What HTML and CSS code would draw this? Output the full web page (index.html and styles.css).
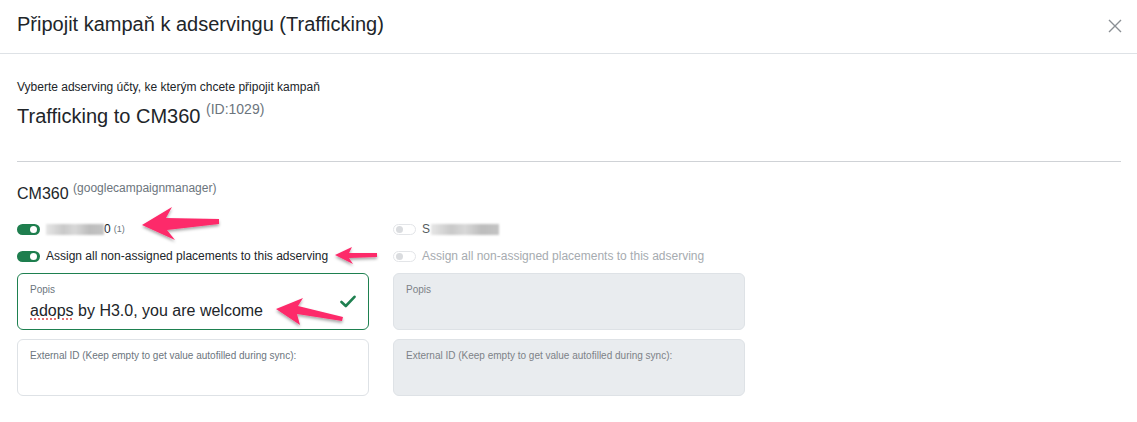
FILE: index.html
```html
<!DOCTYPE html>
<html lang="cs">
<head>
<meta charset="utf-8">
<title>Připojit kampaň k adservingu</title>
<link rel="stylesheet" href="styles.css">
</head>
<body>
<div class="modal">
  <header class="modal-header">
    <h1 class="modal-title">Připojit kampaň k adservingu (Trafficking)</h1>
    <button class="close" aria-label="Close">
      <svg width="14" height="14" viewBox="0 0 14 14"><path d="M1 1L13 13M13 1L1 13" stroke="#8a8f94" stroke-width="1.4" fill="none"/></svg>
    </button>
  </header>
  <main class="modal-body">
    <p class="hint">Vyberte adserving účty, ke kterým chcete připojit kampaň</p>
    <h2 class="traf">Trafficking to CM360 <sup class="sub-id">(ID:1029)</sup></h2>
    <hr class="divider">
    <h3 class="sys">CM360 <sup class="sys-note">(googlecampaignmanager)</sup></h3>
    <div class="cols">
      <div class="col">
        <label class="row">
          <span class="switch on"></span>
          <span class="acct"><span class="blur w84"></span>0 <sup class="cnt">(1)</sup></span>
        </label>
        <label class="row">
          <span class="switch on"></span>
          <span class="txt">Assign all non-assigned placements to this adserving</span>
        </label>
        <div class="field valid">
          <div class="flabel">Popis</div>
          <div class="fvalue"><span class="spell">adops</span> by H3.0, you are welcome</div>
          <svg class="check" width="16" height="13" viewBox="0 0 16 13"><path d="M1.5 7L5.8 11L14.5 1.8" stroke="#1e8050" stroke-width="2.6" fill="none" stroke-linecap="round" stroke-linejoin="round"/></svg>
        </div>
        <div class="field">
          <div class="flabel">External ID (Keep empty to get value autofilled during sync):</div>
        </div>
      </div>
      <div class="col disabled">
        <label class="row">
          <span class="switch"></span>
          <span class="acct sdim">S<span class="blur w68"></span></span>
        </label>
        <label class="row">
          <span class="switch"></span>
          <span class="txt dim">Assign all non-assigned placements to this adserving</span>
        </label>
        <div class="field off">
          <div class="flabel">Popis</div>
        </div>
        <div class="field off">
          <div class="flabel">External ID (Keep empty to get value autofilled during sync):</div>
        </div>
      </div>
    </div>
  </main>
</div>
<svg class="arrows" width="1137" height="422" viewBox="0 0 1137 422">
  <defs>
    <filter id="sh" x="-20%" y="-20%" width="140%" height="160%">
      <feDropShadow dx="0" dy="2" stdDeviation="1.5" flood-color="#000" flood-opacity="0.35"/>
    </filter>
  </defs>
  <g fill="#fd2a6a" filter="url(#sh)">
    <polygon points="142,225 172,207 166,218 219,219 219,224 167,230 175,240"/>
    <polygon points="335,255 352,247 349,253 377,253 377,257 349,258 353,264"/>
    <polygon points="276,309 303,298 298,306 343,317 342,321 297,314 300,325"/>
  </g>
</svg>
</body>
</html>
```

FILE: styles.css
```css
* { box-sizing: border-box; }
html, body { margin: 0; padding: 0; background: #fff; }
body {
  font-family: "Liberation Sans", Arial, sans-serif;
  color: #212529;
  width: 1137px;
  height: 422px;
  overflow: hidden;
  position: relative;
}
.modal { width: 1137px; }
.modal-header {
  height: 54px;
  border-bottom: 1px solid #dee2e6;
  display: flex;
  align-items: center;
  justify-content: space-between;
  padding: 0 14px 4px 17px;
}
.modal-title {
  margin: 0;
  font-size: 20px;
  font-weight: 400;
  color: #212529;
}
.close {
  background: none;
  border: 0;
  padding: 0;
  width: 16px;
  height: 16px;
  display: flex;
  align-items: center;
  justify-content: center;
  margin-top: 3px;
}
.modal-body { padding: 26px 16px 0 17px; }
.hint {
  margin: 0;
  font-size: 12px;
  line-height: 14px;
}
.traf {
  margin: 10px 0 0;
  font-size: 20px;
  line-height: 24px;
  font-weight: 400;
}
.sub-id {
  font-size: 14px;
  color: #6c757d;
  vertical-align: 9px;
  line-height: 0;
}
.divider {
  margin: 33px 0 0;
  border: 0;
  border-top: 1px solid #cfd2d6;
}
.sys {
  margin: 22px 0 0;
  font-size: 16px;
  line-height: 20px;
  font-weight: 400;
}
.sys-note {
  font-size: 12px;
  color: #6c757d;
  vertical-align: 7px;
  line-height: 0;
}
.cols {
  display: grid;
  grid-template-columns: 352px 352px;
  column-gap: 24px;
  margin-top: 17px;
}
.col { display: flex; flex-direction: column; }
.row {
  display: flex;
  align-items: center;
  height: 16px;
  gap: 6px;
  font-size: 12px;
}
.row + .row { margin-top: 11px; }
.switch {
  width: 23px;
  height: 11px;
  border-radius: 6px;
  background: #1e7e4e;
  position: relative;
  flex: none;
}
.switch::after {
  content: "";
  position: absolute;
  top: 2px;
  right: 3px;
  width: 7px;
  height: 7px;
  border-radius: 50%;
  background: #fff;
}
.switch:not(.on) {
  background: #fff;
  border: 1px solid #e3e5e8;
}
.switch:not(.on)::after {
  top: 1px;
  left: 2px;
  right: auto;
  background: #dadcdf;
}
.acct { display: flex; align-items: center; font-size: 12px; }
.blur {
  display: inline-block;
  height: 11px;
  background: linear-gradient(90deg, #e6e6e6, #c9c9c9 30%, #d8d8d8 50%, #bdbdbd 75%, #c4c4c4);
  filter: blur(1px);
}
.w84 { width: 58px; }
.w68 { width: 68px; margin-left: 1px; }
.cnt {
  font-size: 9px;
  color: #6c757d;
  margin-left: 3px;
  vertical-align: 5px;
  line-height: 0;
}
.txt { font-size: 12px; }
.dim { color: #a6abb0; }
.sdim { color: #555b60; }
.field {
  margin-top: 9px;
  height: 57px;
  border: 1px solid #dee2e6;
  border-radius: 6px;
  padding: 10px 12px 0;
  position: relative;
}
.field + .field { margin-top: 9px; }
.field.valid { border-color: #1e8050; }
.field.off { background: #e9ecef; }
.flabel { font-size: 10px; color: #6c757d; line-height: 12px; }
.off .flabel { color: #7d8287; }
.fvalue {
  font-size: 16px;
  line-height: 20px;
  margin-top: 5px;
  color: #212529;
}
.spell {
  text-decoration: underline dotted #e05050;
  text-underline-offset: 3px;
}
.check {
  position: absolute;
  right: 12px;
  top: 21px;
}
.arrows {
  position: absolute;
  left: 0;
  top: 0;
  pointer-events: none;
}
```
